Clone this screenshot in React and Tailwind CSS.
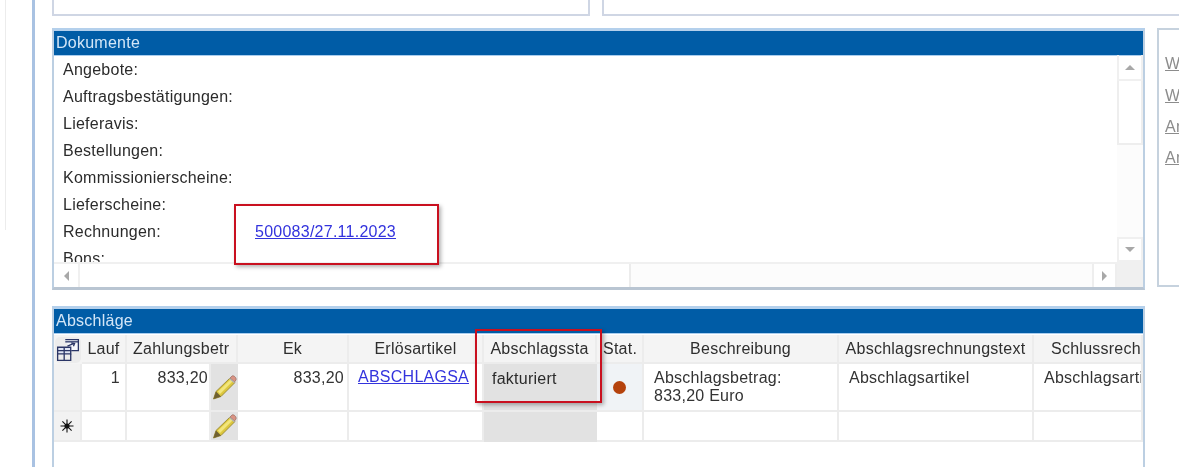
function Pencil() {
  return (
    <svg width="26" height="26" viewBox="0 0 26 26" className="block">
      <path d="M1.5 25 L4 17.5 L18 4 L23 8.5 L9 22.5 Z" fill="#dcc73e" stroke="#8f7f2a" strokeWidth="0.8" />
      <path d="M6 17.5 L18.5 5.5 L20.5 7.5 L8 20 Z" fill="#f2e67c" />
      <path d="M1.5 25 L4 17.5 L9 22.5 Z" fill="#6f6032" />
      <path d="M18 4 L20 2 C21.5 0.8 25 4 24 6 L22.5 8 Z" fill="#d99384" stroke="#8a5a50" strokeWidth="0.6" />
      <path d="M17.5 4.5 L22.5 8.8" stroke="#b4b4b4" strokeWidth="1.3" />
    </svg>
  );
}

function ColumnIcon() {
  return (
    <div className="flex h-[26px] w-[26px] items-center justify-center rounded-[5px] bg-[#ececec]">
      <svg width="24" height="24" viewBox="0 0 22 22" fill="none" stroke="#2a3566" strokeWidth="1.2">
        <path d="M8.5 1.5 H20.5 V11.5 H14" fill="#f6f7fb" />
        <path d="M8.5 3.5 H20.5" />
        <path d="M1.5 8.5 H13.5 V14.5 H1.5 Z" fill="#dfe4f3" />
        <path d="M1.5 14.5 V20.5 H13.5 V14.5 M7.5 8.5 V20.5 M1.5 11.5 H13.5" />
        <path d="M10.5 7.5 L16.5 5 M14 4.5 L17 5 L16 7.5" />
      </svg>
    </div>
  );
}

function Star() {
  return (
    <svg width="16" height="16" viewBox="0 0 16 16" stroke="#111" strokeWidth="1.1" className="block">
      <path d="M8 1.5 V14.5 M1.5 8 H14.5 M3.4 3.4 L12.6 12.6 M12.6 3.4 L3.4 12.6" />
      <circle cx="8" cy="8" r="2" fill="#111" />
    </svg>
  );
}

function Arrow({ dir }) {
  const points = { up: "0,6 5,1 10,6", down: "0,1 5,6 10,1", left: "6,0 1,5 6,10", right: "1,0 6,5 1,10" }[dir];
  const vertical = dir === "up" || dir === "down";
  return (
    <svg width={vertical ? 10 : 7} height={vertical ? 7 : 10} className="block">
      <polygon points={points} fill="#a8a8a8" />
    </svg>
  );
}

const docs = ["Angebote:", "Auftragsbestätigungen:", "Lieferavis:", "Bestellungen:", "Kommissionierscheine:", "Lieferscheine:", "Rechnungen:", "Bons:"];

function Panel({ title, className, children }) {
  return (
    <section className={`flex flex-col border-x-2 border-t-[3px] border-x-[#bccfe2] border-t-[#b4d0ec] ${className}`}>
      <h2 className="flex h-[24px] shrink-0 items-center bg-[#005ca6] pl-[2px] font-normal text-[#d3e6f7] shadow-[0_1px_0_#a9cdee]">{title}</h2>
      {children}
    </section>
  );
}

const cols = "grid grid-cols-[28px_45px_84px_27px_111px_135px_113px_47px_195px_195px_109px]";
const line = "border-r-2 border-b-2 border-[#ececec]";

function Head({ children, className = "" }) {
  return <div className={`flex items-center justify-center overflow-hidden whitespace-nowrap bg-[#f4f4f4] text-[#2e2e2e] ${line} ${className}`}>{children}</div>;
}

function Cell({ children, className = "" }) {
  return <div className={`overflow-hidden whitespace-nowrap bg-white text-[#333] ${line} ${className}`}>{children}</div>;
}

export default function App() {
  return (
    <div className="relative flex h-[467px] w-[1179px] overflow-hidden bg-white font-['Liberation_Sans',sans-serif] text-[16px] leading-[18px] tracking-[0.25px] blur-[0.35px]">
      <div className="w-[32px] shrink-0">
        <div className="h-[230px] w-[6px] border-r border-[#ececec]" />
      </div>
      <div className="w-[3px] shrink-0 bg-[#a9c2e2]" />
      <main className="flex min-w-0 flex-1 flex-col pl-[17px]">
        <div className="flex h-[16px] shrink-0 gap-[12px]">
          <div className="w-[538px] border-x-2 border-b-2 border-[#cfd6e4]" />
          <div className="flex-1 border-l-2 border-b-2 border-[#cfd6e4]" />
        </div>

        <div className="mt-[12px] flex shrink-0 items-start gap-[12px]">
          <Panel title="Dokumente" className="h-[262px] w-[1093px] border-b-[3px] border-b-[#b9c5d2]">
            <div className="flex min-h-0 flex-1">
              <div className="flex min-w-0 flex-1 flex-col">
                <div className="min-h-0 flex-1 overflow-hidden pl-[9px] pt-[1px] text-[#2b2b2b]">
                  {docs.map((label) => (
                    <div key={label} className="flex h-[27px] items-center">
                      <span className="w-[192px] shrink-0">{label}</span>
                      {label === "Rechnungen:" && <a className="text-[#3333dd] underline">500083/27.11.2023</a>}
                    </div>
                  ))}
                </div>
                <div className="flex h-[25px] shrink-0 border-t-2 border-[#f0f0f0]">
                  <div className="flex w-[26px] items-center justify-center border-r-2 border-[#f0f0f0]"><Arrow dir="left" /></div>
                  <div className="w-[551px] border-r-2 border-[#ececec]" />
                  <div className="flex-1 bg-[#fcfcfc]" />
                  <div className="flex w-[25px] items-center justify-center border-x-2 border-[#eeeeee]"><Arrow dir="right" /></div>
                </div>
              </div>
              <div className="flex w-[26px] shrink-0 flex-col">
                <div className="flex h-[26px] items-center justify-center border-2 border-t-0 border-[#f0f0f0]"><Arrow dir="up" /></div>
                <div className="h-[64px] border-2 border-t-0 border-[#eeeeee]" />
                <div className="flex-1 bg-[#fcfcfc]" />
                <div className="flex h-[25px] items-center justify-center border-2 border-[#f0f0f0]"><Arrow dir="down" /></div>
                <div className="h-[25px] bg-[#f0f0f0]" />
              </div>
            </div>
          </Panel>

          <aside className="h-[259px] flex-1 overflow-hidden border-l-2 border-y-2 border-[#c6d2de] pl-[6px] pt-[25px] text-[#8c8c8c] underline">
            <div className="flex h-[32px] items-start">W</div>
            <div className="flex h-[31px] items-start">W</div>
            <div className="flex h-[31px] items-start">An</div>
            <div className="flex h-[31px] items-start">An</div>
          </aside>
        </div>

        <Panel title="Abschläge" className="mt-[16px] w-[1093px] flex-1">
          <div className={`${cols} mt-[2px] h-[29px] shrink-0`}>
            <div className="flex items-center justify-center bg-[#f4f4f4]"><ColumnIcon /></div>
            <Head>Lauf</Head>
            <Head className="col-span-2 justify-start pl-[6px]">Zahlungsbetr</Head>
            <Head>Ek</Head>
            <Head>Erlösartikel</Head>
            <Head>Abschlagssta</Head>
            <Head className="justify-start pl-[6px]">Stat.</Head>
            <Head>Beschreibung</Head>
            <Head>Abschlagsrechnungstext</Head>
            <Head className="justify-start border-r-0 pl-[17px]">Schlussrech</Head>
          </div>

          <div className={`${cols} h-[48px] shrink-0`}>
            <div className={`bg-[#f2f2f2] ${line}`} />
            <Cell className="pr-[5px] pt-[5px] text-right">1</Cell>
            <Cell className="pr-[1px] pt-[5px] text-right">833,20</Cell>
            <div className="flex items-start justify-center border-b-2 border-[#ececec] bg-[#e2e2e2] pt-[10px]"><Pencil /></div>
            <Cell className="pr-[3px] pt-[5px] text-right">833,20</Cell>
            <Cell className="pl-[9px] pt-[4px] text-[#3333dd]"><a className="underline">ABSCHLAGSA</a></Cell>
            <div className="overflow-hidden border-b-2 border-[#ececec] bg-[#e2e2e2] pl-[8px] pt-[6px] text-[#2b2b2b]">fakturiert</div>
            <div className={`flex items-center justify-center bg-[#f0f3f6] ${line}`}>
              <span className="size-[13px] rounded-full bg-[#b5420c]" />
            </div>
            <Cell className="pl-[10px] pt-[5px]">Abschlagsbetrag:<br />833,20 Euro</Cell>
            <Cell className="pl-[10px] pt-[5px]">Abschlagsartikel</Cell>
            <Cell className="border-r-0 pl-[10px] pt-[5px]">Abschlagsartikel</Cell>
          </div>

          <div className={`${cols} h-[30px] shrink-0`}>
            <div className={`flex items-center justify-center bg-[#f2f2f2] ${line}`}><Star /></div>
            <Cell />
            <Cell />
            <div className="flex items-start justify-center border-b-2 border-[#ececec] bg-[#e2e2e2] pt-[1px]"><Pencil /></div>
            <Cell />
            <Cell />
            <div className="bg-[#e2e2e2]" />
            <Cell />
            <Cell />
            <Cell />
            <Cell className="border-r-0" />
          </div>
          <div className="flex-1" />
        </Panel>
      </main>

      <div className="absolute left-[234px] top-[204px] h-[61px] w-[205px] border-2 border-[#c9101f] shadow-[2px_2px_4px_rgba(0,0,0,0.3)]" />
      <div className="absolute left-[475px] top-[329px] h-[74px] w-[127px] border-2 border-[#c9101f] shadow-[2px_2px_4px_rgba(0,0,0,0.3)]" />
    </div>
  );
}
